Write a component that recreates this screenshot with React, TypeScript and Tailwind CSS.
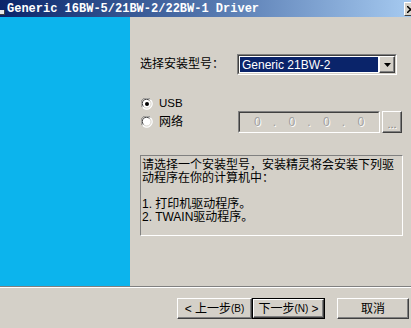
const ui = "font-['Liberation_Sans','Noto_Sans_CJK_SC',sans-serif]";

function Raised({ className = "", children }: { className?: string; children?: React.ReactNode }) {
  return (
    <div
      className={`flex items-center justify-center bg-[#d4d0c8] border border-t-white border-l-white border-b-[#404040] border-r-[#404040] shadow-[inset_-1px_-1px_0_#808080] ${className}`}
    >
      {children}
    </div>
  );
}

function Radio({ checked }: { checked?: boolean }) {
  return (
    <svg width="12" height="12" viewBox="0 0 12 12" className="shrink-0">
      <circle cx="6" cy="6" r="5.5" fill="#ffffff" />
      <path d="M1.5 9.5 A5.5 5.5 0 0 1 9.5 1.5" fill="none" stroke="#808080" strokeWidth="1" />
      <path d="M2.5 8.5 A4.2 4.2 0 0 1 8.5 2.5" fill="none" stroke="#404040" strokeWidth="1" />
      <path d="M9.5 1.5 A5.5 5.5 0 0 1 1.5 9.5" fill="none" stroke="#ffffff" strokeWidth="1" />
      <path d="M8.8 2.8 A4.2 4.2 0 0 1 2.8 8.8" fill="none" stroke="#d4d0c8" strokeWidth="1" />
      {checked && <circle cx="6" cy="6" r="2" fill="#000000" />}
    </svg>
  );
}

function IpField() {
  const parts = ["0", "0", "0", "0"];
  return (
    <div className="w-[142px] h-[22px] border border-t-[#808080] border-l-[#808080] border-b-white border-r-white">
      <div className="w-full h-full border border-t-[#404040] border-l-[#404040] border-b-[#d4d0c8] border-r-[#d4d0c8] flex items-center text-[12px] text-[#a0a0a0] font-['Liberation_Sans',sans-serif]">
        {parts.map((p, i) => (
          <div key={i} className="flex-1 flex items-center">
            <span className="flex-1 text-center [text-shadow:1px_1px_0_#ffffff]">{p}</span>
            {i < parts.length - 1 && <span className="w-0 flex justify-center [text-shadow:1px_1px_0_#ffffff]">.</span>}
          </div>
        ))}
      </div>
    </div>
  );
}

export default function App() {
  return (
    <div className={`w-[411px] h-[328px] bg-[#d4d0c8] overflow-hidden flex flex-col ${ui}`}>
      {/* Title bar */}
      <div className="h-[17px] shrink-0 flex items-center relative bg-gradient-to-r from-[#0a246a] to-[#a6caf0]">
        <div className="w-[6px] h-[12px] ml-0 flex flex-col justify-end">
          <div className="w-[5px] h-[5px] bg-[#e8e8e8] border-r border-b border-[#404040]" />
        </div>
        <span className="ml-[1px] text-white font-bold text-[12px] leading-none font-['Liberation_Mono',monospace]">
          Generic 16BW-5/21BW-2/22BW-1 Driver
        </span>
        <div className="absolute left-[404px] top-[2px] w-[16px] h-[14px] bg-[#d4d0c8] border border-t-white border-l-white border-b-[#404040] border-r-[#404040] flex items-center pl-[2px]">
          <svg width="8" height="7" viewBox="0 0 8 7">
            <path d="M0 0 L7 7 M7 0 L0 7" stroke="#000" strokeWidth="1.5" />
          </svg>
        </div>
      </div>

      {/* Body */}
      <div className="h-[269px] shrink-0 flex">
        <div className="w-[130px] bg-[#0cb4ed]" />
        <div className="flex-1 flex flex-col pl-[10px] pt-[37px]">
          <div className="flex items-center h-[21px]">
            <span className="w-[97px] text-[12px] leading-[13px] text-black">选择安装型号：</span>
            <div className="w-[160px] h-[21px] border border-t-[#808080] border-l-[#808080] border-b-white border-r-white">
              <div className="w-full h-full border border-t-[#404040] border-l-[#404040] border-b-[#d4d0c8] border-r-[#d4d0c8] bg-white flex items-stretch">
                <div className="flex-1 m-[1px] bg-[#0a246a] text-white text-[12px] flex items-center pl-[2px] font-['Liberation_Sans',sans-serif]">
                  Generic 21BW-2
                </div>
                <Raised className="w-[16px]">
                  <svg width="7" height="4" viewBox="0 0 7 4">
                    <path d="M0 0 H7 L3.5 4 Z" fill="#000" />
                  </svg>
                </Raised>
              </div>
            </div>
          </div>

          <div className="mt-[22px] h-[14px] flex items-center">
            <div className="ml-[1px]"><Radio checked /></div>
            <span className="ml-[6px] text-[11.5px] text-black font-['Liberation_Sans',sans-serif]">USB</span>
          </div>
          <div className="h-[22px] flex items-center">
            <div className="ml-[1px]"><Radio /></div>
            <span className="ml-[6px] w-[79px] text-[12px] text-black">网络</span>
            <IpField />
            <Raised className="ml-[2px] w-[20px] h-[22px] items-end pb-[2px]">
              <span className="text-[11px] leading-none text-[#808080] [text-shadow:1px_1px_0_#ffffff]">...</span>
            </Raised>
          </div>

          <div className="mt-[22px] w-[263px] h-[81px] border border-t-[#808080] border-l-[#808080] border-b-white border-r-white pt-[3px] pl-[1px] text-[12px] leading-[13px] text-black">
            <div>请选择一个安装型号，安装精灵将会安装下列驱</div>
            <div>动程序在你的计算机中：</div>
            <div>&nbsp;</div>
            <div>1. 打印机驱动程序。</div>
            <div>2. TWAIN驱动程序。</div>
          </div>
        </div>
      </div>

      {/* Separator */}
      <div className="h-[1px] shrink-0 bg-[#808080]" />
      <div className="h-[1px] shrink-0 bg-white" />

      {/* Buttons */}
      <div className="flex-1 flex items-start pt-[10px] pl-[177px]">
        <Raised className="w-[75px] h-[21px] text-[12px] text-black">
          &lt; 上一步<span className="text-[10px]">(B)</span>
        </Raised>
        <div className="w-[73px] h-[21px] border border-black">
          <Raised className="w-full h-full text-[12px] text-black">
            下一步<span className="text-[10px]">(N)</span>&nbsp;&gt;
          </Raised>
        </div>
        <Raised className="ml-[12px] w-[72px] h-[21px] text-[12px] text-black">取消</Raised>
      </div>
    </div>
  );
}
